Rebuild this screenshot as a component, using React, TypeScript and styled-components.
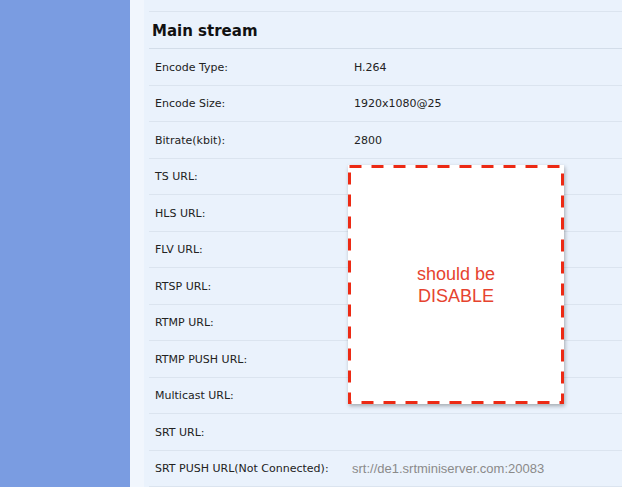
import styled, { createGlobalStyle } from 'styled-components';

const Global = createGlobalStyle`
  html, body {
    margin: 0;
    padding: 0;
    background: #ecf3fd;
  }
  * {
    box-sizing: border-box;
  }
`;

const Page = styled.div`
  display: flex;
  width: 622px;
  height: 487px;
  overflow: hidden;
  font-family: 'DejaVu Sans', Verdana, sans-serif;
`;

const Sidebar = styled.div`
  width: 130px;
  flex-shrink: 0;
  background: #7a9ce1;
`;

const Main = styled.div`
  flex: 1;
  position: relative;
  background: linear-gradient(to right, #f1f6fd 0, #f1f6fd 14px, #eaf2fc 14px);
  padding-left: 19px;
`;

const Table = styled.div`
  display: flex;
  flex-direction: column;
`;

const Spacer = styled.div`
  height: 12px;
  border-bottom: 1px solid #dbe4ef;
`;

const Header = styled.div`
  height: 37px;
  display: flex;
  align-items: center;
  padding: 2px 0 0 3px;
  border-bottom: 1px solid #d3dde9;
  font-size: 15px;
  font-weight: bold;
  color: #111;
`;

const Row = styled.div`
  height: 36.5px;
  display: flex;
  align-items: center;
  padding-top: 1px;
  border-bottom: 1px solid #dbe4ef;
  font-size: 11px;
  color: #222;
`;

const Label = styled.div`
  width: 205px;
  padding-left: 6px;
  flex-shrink: 0;
`;

const Value = styled.div<{ $muted?: boolean }>`
  font-family: ${(p) => (p.$muted ? "'Liberation Sans', Arial, sans-serif" : "'DejaVu Sans', Verdana, sans-serif")};
  font-size: ${(p) => (p.$muted ? '13px' : '11px')};
  color: ${(p) => (p.$muted ? '#8a8a8a' : '#222')};
  margin-left: ${(p) => (p.$muted ? '-2px' : '0')};
`;

const Note = styled.div`
  position: absolute;
  left: 218px;
  top: 165px;
  width: 216px;
  height: 239px;
  background: #fff;
  box-shadow: 1px 2px 4px rgba(0, 0, 0, 0.3);
  display: flex;
  align-items: center;
  justify-content: center;
  text-align: center;
  font-family: 'Liberation Sans', Arial, sans-serif;
  font-size: 18px;
  line-height: 22px;
  color: #e6432f;
`;

const Dashes = styled.svg`
  position: absolute;
  inset: 0;
`;

const rows: [string, string?, boolean?][] = [
  ['Encode Type:', 'H.264'],
  ['Encode Size:', '1920x1080@25'],
  ['Bitrate(kbit):', '2800'],
  ['TS URL:'],
  ['HLS URL:'],
  ['FLV URL:'],
  ['RTSP URL:'],
  ['RTMP URL:'],
  ['RTMP PUSH URL:'],
  ['Multicast URL:'],
  ['SRT URL:'],
  ['SRT PUSH URL(Not Connected):', 'srt://de1.srtminiserver.com:20083', true],
];

export default function App() {
  return (
    <Page>
      <Global />
      <Sidebar />
      <Main>
        <Table>
          <Spacer />
          <Header>Main stream</Header>
          {rows.map(([label, value, muted]) => (
            <Row key={label}>
              <Label>{label}</Label>
              {value && <Value $muted={muted}>{value}</Value>}
            </Row>
          ))}
        </Table>
        <Note>
          <Dashes width="216" height="239">
            <rect
              x="1.5"
              y="1.5"
              width="213"
              height="236"
              fill="none"
              stroke="#ec2a14"
              strokeWidth="3"
              strokeDasharray="12 10"
            />
          </Dashes>
          <div>
            should be
            <br />
            DISABLE
          </div>
        </Note>
      </Main>
    </Page>
  );
}
